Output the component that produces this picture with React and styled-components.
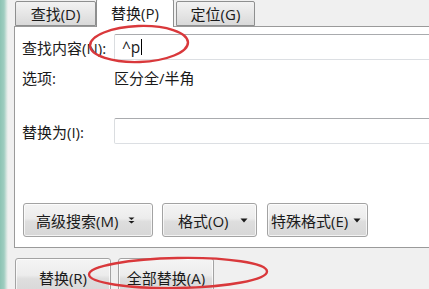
import React from "react";
import styled, { createGlobalStyle } from "styled-components";

const Global = createGlobalStyle`
  html, body { margin: 0; padding: 0; background: #f0f0f0; }
  body { font-family: "Open Sans", "Noto Sans CJK SC", sans-serif; }
`;

const FONT = `"Open Sans", "Noto Sans CJK SC", sans-serif`;

const Screen = styled.div`
  position: relative;
  width: 429px;
  height: 289px;
  overflow: hidden;
  display: flex;
  background: #f0f0f0;
  font-family: ${FONT};
  font-size: 15px;
  color: #1a1a1a;
`;

const SideStrip = styled.div`
  width: 8px;
  flex: none;
  background: linear-gradient(to right, #8cc3b3 0px, #9fcdc0 4px, #dfe9e5 7px, #eef0ef 8px);
`;

const Main = styled.div`
  flex: 1;
  display: flex;
  flex-direction: column;
  padding-left: 6px;
`;

const TabBar = styled.div`
  flex: none;
  height: 26px;
  display: flex;
  align-items: flex-end;
  position: relative;
  z-index: 1;
`;

const Tab = styled.div`
  box-sizing: border-box;
  width: ${(p) => p.$w}px;
  height: ${(p) => (p.$active ? 28 : 25)}px;
  margin-bottom: ${(p) => (p.$active ? -1 : 0)}px;
  margin-left: ${(p) => p.$ml || 0}px;
  border: 1px solid #8e8f8f;
  border-bottom: ${(p) => (p.$active ? "none" : "1px solid #8e8f8f")};
  border-radius: 2px 2px 0 0;
  background: ${(p) =>
    p.$active ? "#ffffff" : "linear-gradient(#f2f2f2, #e6e6e6 50%, #d9d9d9)"};
  display: flex;
  align-items: center;
  justify-content: center;
  padding-bottom: ${(p) => (p.$active ? 3 : 0)}px;
  white-space: nowrap;
`;

const Panel = styled.div`
  flex: none;
  box-sizing: border-box;
  height: 222px;
  border: 1px solid #9a9a9a;
  border-right: none;
  background: #ffffff;
  display: flex;
  flex-direction: column;
  padding: 0 0 0 7px;
`;

const FieldRow = styled.div`
  flex: none;
  display: flex;
  align-items: center;
  height: ${(p) => p.$h}px;
  margin-top: ${(p) => p.$mt}px;
`;

const Label = styled.div`
  width: 92px;
  flex: none;
  white-space: nowrap;
`;

const TextBox = styled.div`
  box-sizing: border-box;
  flex: 1;
  height: 100%;
  margin-right: -4px;
  border: 1px solid #dcdfe3;
  border-top-color: #a9abae;
  border-left-color: #dadde0;
  border-radius: 2px 0 0 2px;
  display: flex;
  align-items: center;
  padding-left: 7px;
  white-space: nowrap;
  font-size: 15.5px;
`;

const Caret = styled.span`
  display: inline-block;
  width: 1px;
  height: 16px;
  background: #000;
  margin-left: 1px;
  vertical-align: middle;
`;

const OptionValue = styled.div`
  white-space: nowrap;
`;

const ButtonRow = styled.div`
  flex: none;
  display: flex;
  gap: 9px;
  margin-top: 59px;
  padding-left: 1px;
  height: 34px;
`;

const Btn = styled.div`
  box-sizing: border-box;
  width: ${(p) => p.$w}px;
  height: ${(p) => p.$h || 34}px;
  margin-left: ${(p) => p.$ml || 0}px;
  border: 1px solid #a3a3a3;
  border-radius: 3px;
  background: linear-gradient(#f4f4f4, #ececec 45%, #dedede 55%, #d7d7d7);
  box-shadow: inset 0 0 0 1px rgba(255, 255, 255, 0.7);
  display: flex;
  align-items: center;
  justify-content: ${(p) => (p.$arrow ? "space-between" : "center")};
  padding: ${(p) => p.$pad || "0"};
  white-space: nowrap;
  flex: none;
`;

const BtnText = styled.span`
  margin-left: ${(p) => p.$ml || 0}px;
`;

const ArrowSlot = styled.span`
  display: flex;
  margin-right: ${(p) => p.$mr || 0}px;
`;

const BottomBar = styled.div`
  flex: none;
  display: flex;
  gap: 7px;
  margin-top: 10px;
  padding-left: 1px;
`;

const Overlay = styled.svg`
  position: absolute;
  left: 0;
  top: 0;
  pointer-events: none;
  z-index: 5;
`;

const DoubleDown = () => (
  <svg width="7" height="8" viewBox="0 0 7 8">
    <path d="M0.5 1.5 H6.5 L3.5 4 Z" fill="#1a1a1a" />
    <path d="M0.5 5 H6.5 L3.5 7.5 Z" fill="#1a1a1a" />
  </svg>
);

const Down = () => (
  <svg width="8" height="5" viewBox="0 0 8 5">
    <path d="M0.5 0.5 H7.5 L4 4.5 Z" fill="#1a1a1a" />
  </svg>
);

export default function App() {
  return (
    <>
      <Global />
      <Screen>
        <SideStrip />
        <Main>
          <TabBar>
            <Tab $w={81} $ml={1}>查找(D)</Tab>
            <Tab $w={78} $active>替换(P)</Tab>
            <Tab $w={79} $ml={2}>定位(G)</Tab>
          </TabBar>
          <Panel>
            <FieldRow $h={26} $mt={7}>
              <Label>查找内容(N):</Label>
              <TextBox>
                ^p<Caret />
              </TextBox>
            </FieldRow>
            <FieldRow $h={20} $mt={7}>
              <Label>选项:</Label>
              <OptionValue>区分全/半角</OptionValue>
            </FieldRow>
            <FieldRow $h={26} $mt={31}>
              <Label>替换为(I):</Label>
              <TextBox />
            </FieldRow>
            <ButtonRow>
              <Btn $w={130} $arrow $pad="0 8px 0 12px">
                <BtnText>高级搜索(M)</BtnText>
                <ArrowSlot $mr={9}>
                  <DoubleDown />
                </ArrowSlot>
              </Btn>
              <Btn $w={95} $arrow $pad="0 8px 0 12px">
                <BtnText $ml={3}>格式(O)</BtnText>
                <ArrowSlot>
                  <Down />
                </ArrowSlot>
              </Btn>
              <Btn $w={101} $arrow $ml={1} $pad="0 6px 0 3px">
                <BtnText>特殊格式(E)</BtnText>
                <ArrowSlot>
                  <Down />
                </ArrowSlot>
              </Btn>
            </ButtonRow>
          </Panel>
          <BottomBar>
            <Btn $w={96} $h={38}>替换(R)</Btn>
            <Btn $w={96} $h={38}>全部替换(A)</Btn>
          </BottomBar>
        </Main>
        <Overlay width="429" height="289" viewBox="0 0 429 289">
          <ellipse cx="139" cy="44" rx="49" ry="18" fill="none" stroke="#d9383b" strokeWidth="2.4" transform="rotate(-2 139 44)" />
          <ellipse cx="178" cy="273" rx="89" ry="15" fill="none" stroke="#d9383b" strokeWidth="2.4" transform="rotate(-1 178 273)" />
        </Overlay>
      </Screen>
    </>
  );
}
